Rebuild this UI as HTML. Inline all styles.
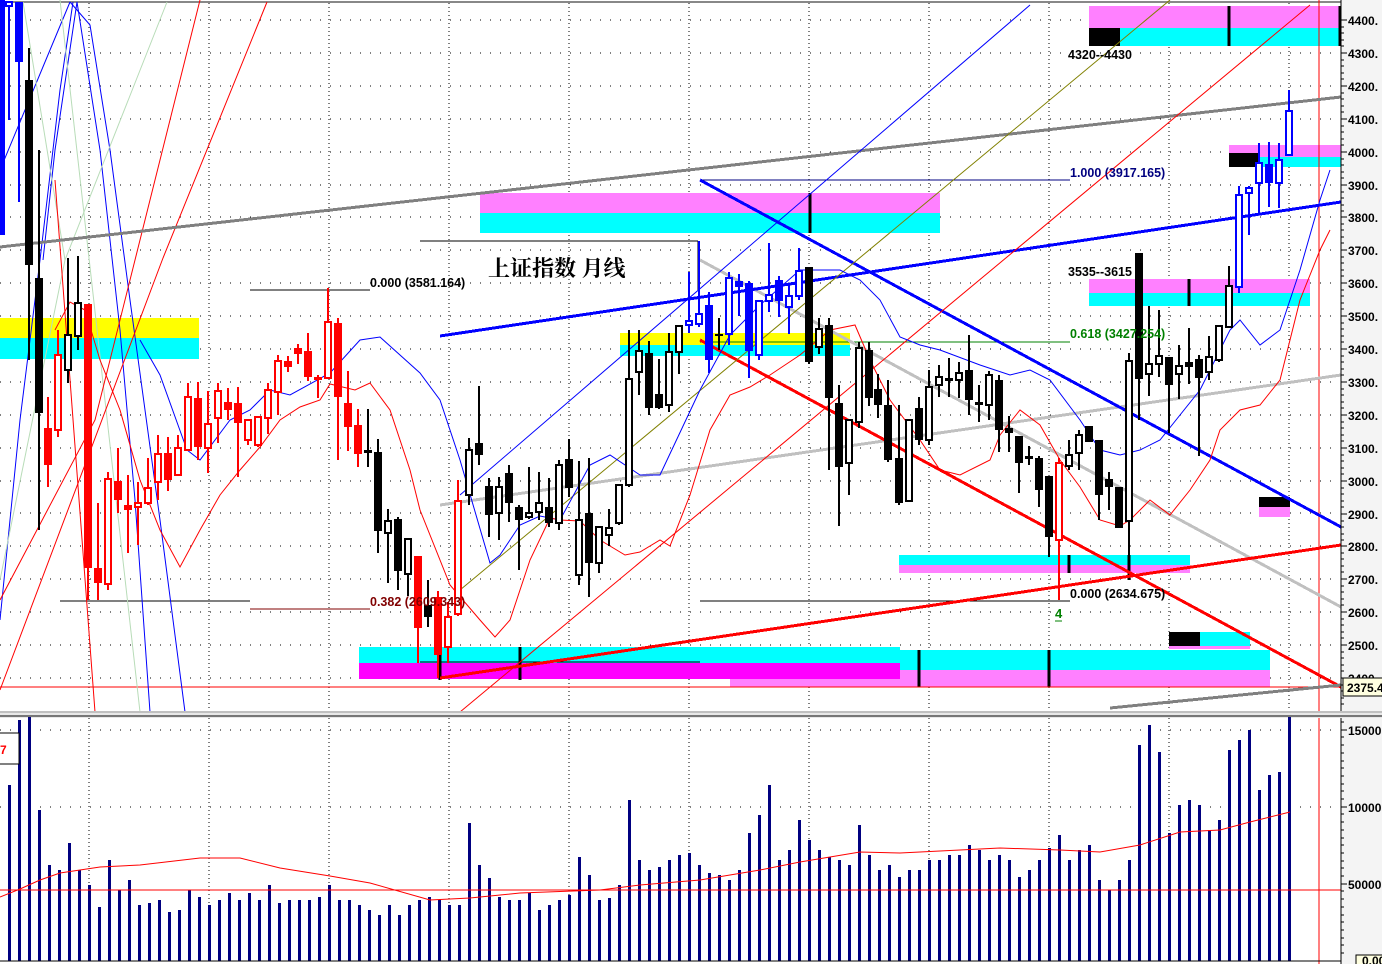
<!DOCTYPE html>
<html><head><meta charset="utf-8">
<style>
html,body{margin:0;padding:0;background:#fff;}
body{width:1382px;height:964px;overflow:hidden;position:relative;font-family:"Liberation Sans",sans-serif;}
svg text{font-family:"Liberation Sans","Noto Sans CJK SC",sans-serif;font-weight:bold;}
</style></head><body>
<svg id="c" width="1382" height="964" viewBox="0 0 1382 964" xmlns="http://www.w3.org/2000/svg" shape-rendering="crispEdges"></svg>
<script>
var s='';
function R(x,y,w,h,c){s+='<rect x="'+x+'" y="'+y+'" width="'+w+'" height="'+h+'" fill="'+c+'"/>';}
function L(x1,y1,x2,y2,c,w,d){s+='<line x1="'+x1+'" y1="'+y1+'" x2="'+x2+'" y2="'+y2+'" stroke="'+c+'" stroke-width="'+(w||1)+'"'+(d?' stroke-dasharray="'+d+'"':'')+'/>';}
function P(pts,c,w){s+='<polyline fill="none" stroke="'+c+'" stroke-width="'+(w||1)+'" points="'+pts+'" shape-rendering="auto"/>';}
function T(x,y,t,c,sz,anc){s+='<text x="'+x+'" y="'+y+'" fill="'+c+'" font-size="'+(sz||12)+'"'+(anc?' text-anchor="'+anc+'"':'')+'>'+t+'</text>';}
R(1341,0,41,964,'#f4f4f4');
for(var y=20;y<=690;y+=32.9){L(0,Math.round(y),1340,Math.round(y),'#000',1,'1 9');}
for(var x=89;x<1340;x+=120){L(x,3,x,711,'#000',1,'1 3');L(x,718,x,961,'#000',1,'1 3');}
[730,807].forEach(function(y){L(0,y,1340,y,'#000',1,'1 9');});
R(0,318,199,20,'#ffff00');R(0,338,199,21,'#00ffff');
R(1089,6,252,22,'#ff80ff');R(1089,28,252,18,'#00ffff');R(1089,28,31,18,'#000');
R(480,193,460,20,'#ff80ff');R(480,213,460,20,'#00ffff');
R(620,333,230,12,'#ffff00');R(620,345,230,11,'#00ffff');
R(1089,279,221,14,'#ff80ff');R(1089,293,221,13,'#00ffff');
R(1229,145,112,12,'#ff80ff');R(1229,157,112,10,'#00ffff');R(1229,153,29,14,'#000');
R(899,555,291,10,'#00ffff');R(899,565,291,8,'#ff80ff');
R(730,663,540,24,'#ff80ff');
R(359,647,541,16,'#00ffff');R(359,663,541,16,'#ff00ff');
R(900,650,370,20,'#00ffff');
R(1169,632,81,16,'#00ffff');R(1169,632,31,16,'#000');R(1169,646,81,3,'#ff80ff');
R(1259,497,31,10,'#000');R(1259,507,31,10,'#ff80ff');
[[810,193,233],[1189,279,306],[520,647,680],[440,650,680],[919,650,687],[1049,650,687],[1229,6,46],[1340,6,46],[1129,555,580],[1069,555,573]].forEach(function(a){L(a[0],a[1],a[0],a[2],'#000',3);});
L(0,2,1341,2,'#888',2);
L(1319,0,1319,964,'#ff0000',1);
L(0,687,1341,687,'#ff0000',1);
L(60,601,250,601,'#000',1);L(250,609,370,609,'#800000',1);L(250,290,370,290,'#000',1);
L(420,241,698,241,'#000',1);L(698,241,698,290,'#000',1);L(420,662,700,662,'#000',1);
L(700,180,1070,180,'#000080',1);L(700,342,1070,342,'#008000',1);L(700,601,1070,601,'#000',1);
P('0,170 70,2','#0000ff',1);P('43,260 55,150 77,2','#0000ff',1);
P('70,2 90,25 110,150 130,300 160,520 185,712','#0000ff',1);
P('77,2 100,150 120,330 135,500 150,712','#0000ff',1);
P('0,620 20,420 40,260 60,90 73,2','#0000ff',1);
P('23,2 65,260','#b8dcb8',1);P('167,2 65,260 0,580','#b8dcb8',1);P('60,0 140,712','#b8dcb8',1);
P('0,690 163,258 267,2','#ff0000',1);P('55,180 95,712','#ff0000',1);P('0,600 95,420 200,0','#ff0000',1);
L(0,247,1341,97,'#808080',3);
L(440,505,1341,375,'#c0c0c0',3);
L(700,260,1341,607,'#c0c0c0',3);
L(440,336,1341,202,'#0000ff',3);
L(700,180,1341,527,'#0000ff',3);
L(440,678,1341,545,'#ff0000',3);
L(700,340,1341,687,'#ff0000',3);
L(1110,708,1341,685,'#808080',3);
P('460,495 1030,5','#0000ff',1);
P('460,590 1170,0','#808000',1);
P('460,712 1310,5','#ff0000',1);
P('140,340 160,375 187,450 200,460 230,420 250,410 270,390 290,395 330,373 360,340 380,337 420,373 440,400 460,460 490,563 500,555 520,525 540,516 560,520 590,465 610,455 640,475 660,475 700,390 730,335 760,305 800,270 840,270 860,280 880,300 900,337 920,345 940,350 980,365 1010,375 1030,370 1050,380 1080,420 1100,450 1120,455 1140,450 1160,440 1200,390 1230,330 1240,320 1260,345 1280,330 1300,270 1320,200 1330,170','#0000ff',1);
P('55,330 70,302 85,310 100,360 120,410 140,480 160,530 180,567 200,530 220,495 240,470 260,447 280,420 300,407 320,400 330,384 355,390 370,383 390,410 410,470 420,510 450,585 480,620 495,637 510,620 530,560 550,518 560,520 580,521 600,540 625,555 640,552 660,540 670,546 690,495 710,430 730,395 750,387 770,375 800,355 830,330 855,325 870,360 890,400 920,440 940,470 960,475 990,460 1000,435 1020,410 1040,425 1060,460 1080,487 1100,520 1120,526 1130,520 1150,500 1170,515 1190,490 1210,460 1220,430 1240,410 1260,405 1280,380 1300,300 1320,250 1330,230','#ff0000',1);
var C={r:'#ff0000',k:'#000',b:'#0000ff'};
var d=[[1,0,235,0,235,'b',0],[9,2,120,2,6,'b',1],[19,2,202,2,62,'b',0],[29,48,360,80,265,'k',0],[39,150,530,278,413,'k',0],
[48,397,487,428,465,'r',0],[58,330,437,355,430,'r',1],[68,258,383,335,370,'k',1],[78,256,350,303,336,'k',1],[88,304,600,304,568,'r',0],[98,503,600,568,583,'r',0],[108,472,590,479,584,'r',1],[118,448,513,481,500,'r',0],[128,475,553,505,510,'r',0],[138,482,545,503,507,'r',1],[148,458,505,488,503,'r',1],[158,435,500,454,482,'r',1],[168,437,491,453,480,'r',0],[178,435,475,448,475,'r',1],[188,383,447,397,450,'r',1],[198,382,460,398,447,'r',0],[208,391,473,424,448,'r',1],[218,383,443,391,418,'r',1],[228,388,420,402,410,'r',0],[238,387,477,403,423,'r',0],[248,420,445,420,440,'r',1],[258,417,447,417,445,'r',1],[268,383,434,390,418,'r',1],[278,355,415,361,392,'r',1],[288,356,372,361,367,'r',0],[298,344,364,348,354,'r',0],[308,333,381,351,377,'r',0],[318,375,398,377,380,'r',0],[328,288,378,322,378,'r',1],[338,318,460,323,397,'r',0],[348,371,451,403,427,'r',0],[358,409,467,425,454,'r',0],[368,409,467,450,453,'k',0],[378,439,553,452,531,'k',0],[388,509,583,521,533,'k',1],[398,517,590,519,571,'k',0],[408,553,596,539,574,'k',1],[418,556,663,556,628,'r',0],[428,580,627,605,617,'k',0],[438,591,678,597,655,'r',0],[448,602,663,617,647,'r',1],[458,480,616,501,614,'r',1],
[469,438,505,450,495,'k',1],[479,386,465,443,455,'k',0],[489,478,537,486,515,'k',0],[499,477,540,487,513,'k',1],[509,465,522,473,503,'k',0],[519,505,570,507,520,'k',0],[529,467,519,513,517,'k',1],[539,472,520,503,512,'k',1],[549,478,527,507,523,'k',0],[559,460,530,465,523,'k',1],[569,439,497,459,488,'k',0],[579,461,585,520,575,'k',1],[589,458,597,513,563,'k',0],[599,527,573,527,563,'k',1],[609,509,546,528,535,'k',1],[619,485,525,485,523,'k',1],[629,330,487,379,485,'k',1],[639,330,395,351,372,'k',1],[649,341,415,353,408,'k',0],[659,359,409,394,408,'k',0],[669,333,412,352,405,'k',1],[679,326,374,326,352,'k',1],[689,272,333,321,325,'b',1],[699,241,327,314,324,'b',1],[709,292,373,305,360,'b',0],[719,318,350,334,336,'k',0],[729,272,345,278,334,'b',1],[739,274,316,281,287,'b',0],[749,281,378,283,351,'b',0],[759,301,360,301,355,'b',1],[769,243,312,295,301,'b',1],[779,276,317,280,301,'b',0],[789,285,334,296,307,'b',1],[799,248,300,271,296,'b',1],[809,267,364,267,362,'k',0],[819,318,354,329,347,'k',1],[829,318,470,325,398,'k',0],[839,385,526,403,467,'k',0],[849,420,495,420,463,'k',1],[859,342,428,348,422,'k',1],[869,342,406,350,398,'k',0],
[878,374,418,389,405,'k',0],[888,380,462,405,460,'k',0],[899,405,505,458,503,'k',0],[909,420,501,420,501,'k',1],[919,397,445,408,440,'k',0],[929,370,445,387,440,'k',1],[939,365,397,377,385,'k',1],[949,358,397,378,381,'k',0],[959,362,398,373,380,'k',1],[969,335,415,370,400,'k',0],[979,385,422,402,405,'k',0],[989,371,420,375,405,'k',1],[999,375,452,380,430,'k',0],[1009,416,452,428,433,'k',0],[1019,436,493,436,463,'k',0],[1029,446,465,456,459,'k',0],[1039,456,507,458,490,'k',0],[1049,476,557,476,537,'k',0],[1059,458,600,463,540,'r',1],[1069,440,470,455,466,'k',1],[1079,430,470,435,453,'k',1],[1089,426,442,426,442,'k',0],[1099,440,520,440,495,'k',0],[1109,472,510,479,487,'k',0],[1119,487,528,487,528,'k',0],[1129,353,568,361,521,'k',1],[1139,253,420,253,379,'k',0],[1149,306,396,364,374,'k',1],[1159,310,377,356,364,'k',1],[1169,357,433,357,385,'k',0],[1179,345,399,366,374,'k',1],[1189,328,384,362,367,'k',0],[1199,355,456,359,378,'k',0],[1209,336,380,357,372,'k',1],[1219,330,362,326,360,'k',1],[1229,266,327,286,327,'k',1],[1239,186,293,195,287,'b',1],[1249,186,235,188,193,'b',1],[1259,143,213,163,183,'b',1],[1269,142,207,164,183,'b',0],[1279,143,208,160,183,'b',1],[1289,90,155,111,155,'b',1]];
d.forEach(function(a){var c=C[a[5]];L(a[0],a[1],a[0],a[2],c,2);
 var h=Math.max(a[4]-a[3],2);
 if(a[6]){s+='<rect x="'+(a[0]-3)+'" y="'+a[3]+'" width="6" height="'+h+'" fill="#fff" stroke="'+c+'" stroke-width="2"/>';}
 else R(a[0]-4,a[3],8,h,c);});
T(370,287,'0.000 (3581.164)','#000',12.5);
T(370,606,'0.382 (2609.343)','#800000',12.5);
T(1070,177,'1.000 (3917.165)','#000080',12.5);
T(1070,338,'0.618 (3427.254)','#008000',12.5);
T(1070,598,'0.000 (2634.675)','#000',12.5);
T(1068,59,'4320--4430','#000',12.5);
T(1068,276,'3535--3615','#000',12.5);
T(1055,618,'4','#008000',13);L(1055,621,1062,621,'#008000',1);
s+='<text x="488" y="276" fill="#000" font-size="22" style="font-family:\'Noto Serif CJK SC\',\'Noto Sans CJK SC\',serif;font-weight:bold">上证指数 月线</text>';
L(1341,0,1341,712,'#000',1);
var labs=['4400.','4300.','4200.','4100.','4000.','3900.','3800.','3700.','3600.','3500.','3400.','3300.','3200.','3100.','3000.','2900.','2800.','2700.','2600.','2500.','2400.'];
for(var i=0;i<labs.length;i++){var yy=Math.round(20+i*32.9);L(1341,yy,1347,yy,'#000',1);
 for(var k=1;k<5;k++){var y2=Math.round(yy+k*6.6);if(y2<705)L(1341,y2,1344,y2,'#000',1);}
 T(1348,yy+5,labs[i],'#000',12);}
s+='<rect x="1343" y="678" width="40" height="18" fill="#ffffe0" stroke="#000" stroke-width="1"/>';T(1347,692,'2375.4','#000',12);
R(0,711,1382,7,'#e8e8e8');L(0,712,1382,712,'#999',1);L(0,716,1382,716,'#777',2);
var v=[[9,785],[19,720],[29,717],[39,810],[49,865],[59,870],[69,843],[79,870],[89,885],[99,907],[109,860],[119,890],[129,880],[139,905],[149,903],[159,900],[169,912],[179,910],[189,890],[199,897],[209,905],[219,900],[229,893],[239,900],[249,893],[259,900],[269,885],[279,903],[289,900],[299,900],[309,900],[319,897],[329,885],[339,900],[349,900],[359,905],[369,910],[379,915],[389,905],[399,915],[409,905],[419,900],[429,897],[439,900],[449,905],[459,905],[469,823],[479,865],[489,878],[499,897],[509,900],[519,900],[529,893],[539,910],[549,905],[559,900],[569,895],[579,857],[589,875],[599,900],[609,898],[619,885],[629,800],[639,860],[649,870],[659,867],[669,860],[679,855],[689,853],[699,865],[709,873],[719,875],[729,880],[739,870],[749,833],[759,815],[769,785],[779,860],[789,850],[799,820],[809,840],[819,850],[829,857],[839,860],[849,865],[859,825],[869,855],[879,870],[889,865],[899,877],[909,870],[919,870],[929,860],[939,860],[949,855],[959,855],[969,845],[979,850],[989,860],[999,855],[1009,860],[1019,877],[1029,870],[1039,860],[1049,848],[1059,835],[1069,860],[1079,850],[1089,845],[1099,880],[1109,890],[1119,880],[1129,860],[1139,745],[1149,725],[1159,752],[1169,833],[1179,805],[1189,800],[1199,805],[1209,830],[1219,820],[1229,750],[1239,740],[1249,730],[1259,790],[1269,775],[1279,772],[1289,717]];
v.forEach(function(a){R(a[0]-1,a[1],3,961-a[1],'#000080');});
P('0,897 20,889 40,880 60,873 100,867 140,865 200,858 240,858 280,868 330,876 370,883 430,900 470,898 520,893 600,890 640,885 700,880 760,870 800,862 860,852 900,853 960,850 1000,848 1060,850 1100,852 1140,845 1180,832 1220,830 1250,822 1290,812','#ff0000',1);
L(0,890,1341,890,'#ff0000',1);
s+='<rect x="-1" y="733" width="20" height="31" fill="#fff" stroke="#000" stroke-width="1"/>';T(0,754,'7','#ff0000',12);
L(1341,718,1341,964,'#000',1);
[[730,'15000'],[807,'10000'],[884,'50000']].forEach(function(a){L(1341,a[0],1347,a[0],'#000',1);T(1348,a[0]+5,a[1],'#000',12);});
for(var yy=722;yy<960;yy+=7.7){L(1341,Math.round(yy),1344,Math.round(yy),'#000',1);}
s+='<rect x="1356" y="955" width="30" height="12" fill="#ffffe0" stroke="#000" stroke-width="1"/>';T(1362,965,'0.00','#000',12);
L(0,961,1341,961,'#000',1);
document.getElementById('c').innerHTML=s;
</script>
</body></html>
